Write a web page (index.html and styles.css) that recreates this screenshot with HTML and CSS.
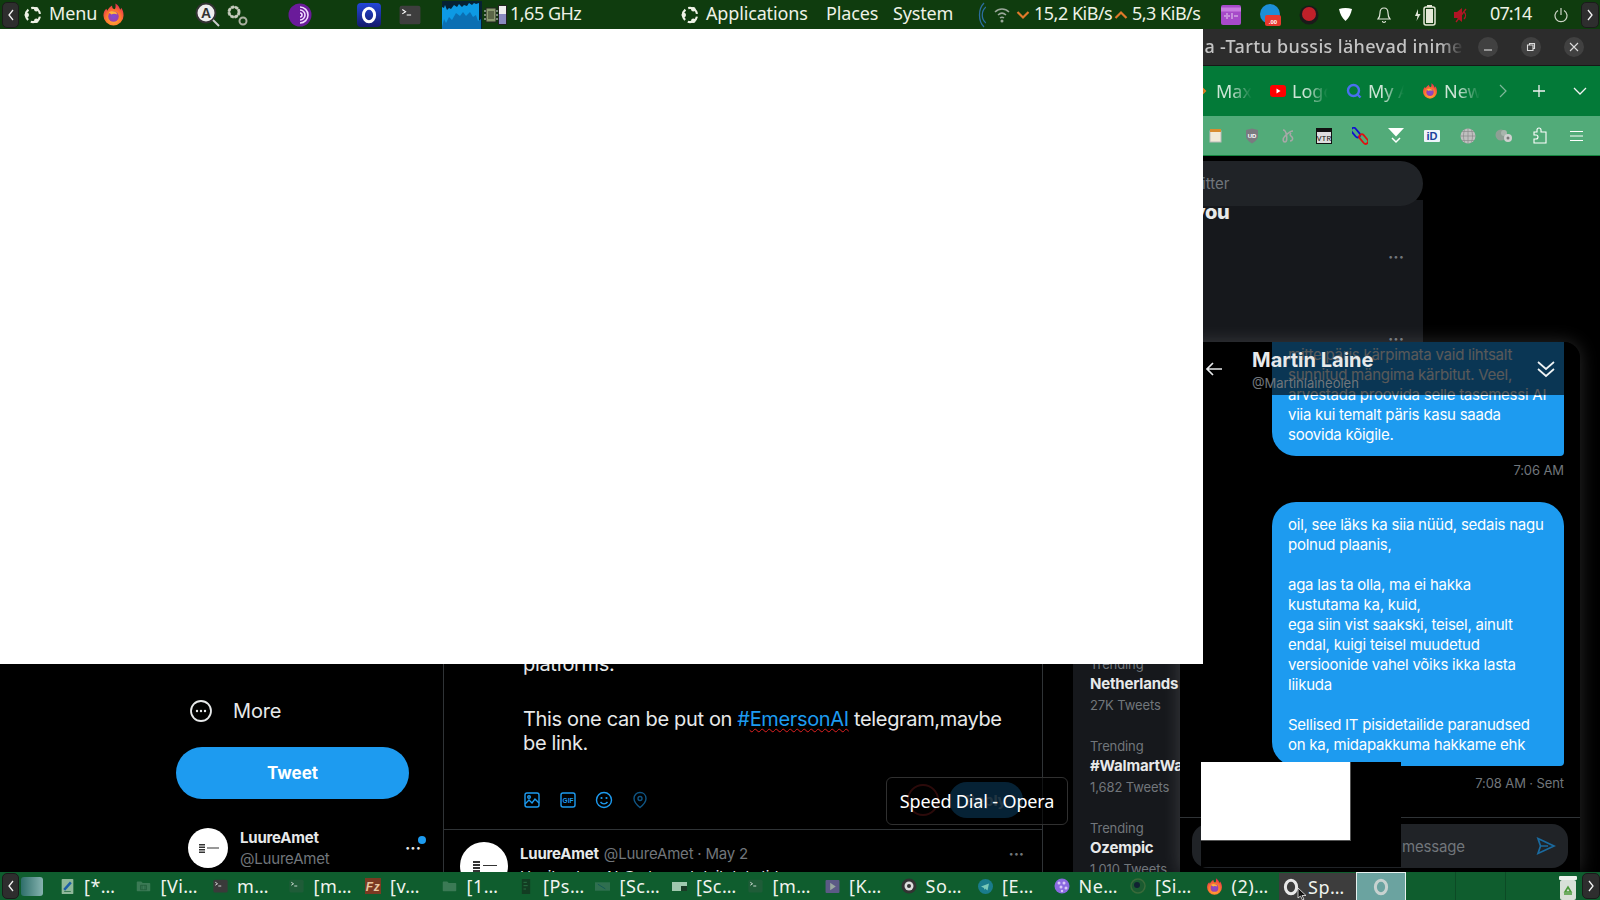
FILE: index.html
```html
<!DOCTYPE html>
<html lang="et">
<head>
<meta charset="utf-8">
<title>Desktop</title>
<link rel="stylesheet" href="styles.css">
</head>
<body>
<svg class="defs" width="0" height="0" aria-hidden="true">
  <defs>
    <radialGradient id="ffg" cx="50%" cy="70%" r="65%"><stop offset="0" stop-color="#ffbd3a"/><stop offset=".55" stop-color="#ff7a2e"/><stop offset="1" stop-color="#e8304f"/></radialGradient>
    <radialGradient id="ffp" cx="50%" cy="50%" r="55%"><stop offset="0" stop-color="#7a4fd8"/><stop offset="1" stop-color="#a43ca0"/></radialGradient>
    <symbol id="firefox" viewBox="0 0 24 24"><path d="M12 23.500a10.500 10.500 0 0 1-10.500-10.500c0-3 1.200-5.500 3-7l1 2c1-2.500 3-4 5-5.500 0 2.500 1 3.500 2.500 4 1-.500 1.500-2 1-6 3.500 2 4.500 5 5 6.500 .5-.5 .8-1 1-2 1.500 2 2.500 4.500 2.500 8A10.500 10.500 0 0 1 12 23.500z" fill="url(#ffg)"/><circle cx="12" cy="14" r="5.500" fill="url(#ffp)"/><path d="M7 10c3-2.500 8-1.500 9 2-2-1-5-1-6 0z" fill="#ffb53a"/></symbol>
    <symbol id="ubuntu" viewBox="0 0 24 24"><circle cx="12" cy="12" r="8.500" fill="none" stroke="currentColor" stroke-width="2.600" stroke-dasharray="14 3.800" stroke-dashoffset="-2"/><circle cx="4.500" cy="12" r="2.700" fill="currentColor"/><circle cx="16" cy="5" r="2.700" fill="currentColor"/><circle cx="16" cy="19" r="2.700" fill="currentColor"/></symbol>
    <symbol id="term" viewBox="0 0 20 18"><rect x=".5" y=".5" width="19" height="17" rx="2" fill="currentColor"/><path d="M3 4l3 2-3 2M7 9h4" fill="none" stroke="#fff" stroke-width="1"/></symbol>
    <symbol id="folder" viewBox="0 0 20 18"><path d="M1 4a1 1 0 0 1 1-1h5l2 2h9a1 1 0 0 1 1 1v9a1 1 0 0 1-1 1H2a1 1 0 0 1-1-1z" fill="#3b7a55"/></symbol>
    <symbol id="opera" viewBox="0 0 24 24"><ellipse cx="12" cy="12" rx="7.500" ry="9" fill="none" stroke="currentColor" stroke-width="4"/></symbol>
  </defs>
</svg>

<div class="screen">
  <header class="panel top">
    <div class="pgroup pl">
      <span class="edge"><svg width="8" height="12" viewBox="0 0 8 12"><path d="M6 1L2 6l4 5" class="line-w"/></svg></span>
      <svg class="ico ubu" width="20" height="20"><use href="#ubuntu"/></svg>
      <span class="ptext menu">Menu</span>
      <svg class="ico ff" width="23" height="23"><use href="#firefox"/></svg>
      <svg class="ico app-a" width="26" height="26" viewBox="0 0 26 26"><circle cx="11" cy="11" r="9.500" fill="#eee" stroke="#333" stroke-width="2"/><path d="M18 18l6 6" stroke="#ccc" stroke-width="2"/><text x="11" y="16" text-anchor="middle" class="a-letter">A</text></svg>
      <svg class="ico gears" width="24" height="24" viewBox="0 0 24 24"><circle cx="9" cy="9" r="5" fill="none" stroke="#b9c0b0" stroke-width="3" stroke-dasharray="3 1"/><circle cx="9" cy="9" r="5" fill="none" stroke="#c9cfc0" stroke-width="1.500"/><circle cx="18" cy="18" r="3.500" fill="none" stroke="#aab0a0" stroke-width="2"/></svg>
      <svg class="ico tor" width="24" height="24" viewBox="0 0 24 24"><circle cx="12" cy="12" r="11.500" fill="#6a1b9a"/><path d="M12 4a8 8 0 0 1 0 16M12 7a5 5 0 0 1 0 10M12 10a2 2 0 0 1 0 4" fill="none" stroke="#f2dcff" stroke-width="1.600"/></svg>
      <span class="ico opera-box"><svg width="18" height="18"><use href="#opera"/></svg></span>
      <svg class="ico pterm" width="22" height="20"><use href="#term"/></svg>
      <svg class="ico graph" width="40" height="28" viewBox="0 0 40 28"><rect width="40" height="28" fill="#062133"/><path d="M0 6l2 1 1-3 2 5 2-2 2 1 3-4 3 2 2-3 3 3 2-2 3 1 2-3 3 2 2-2 2 1 3-1v26H0z" fill="#0d9ae4"/><path d="M0 26l2-8 2 4 3-6 3 3 4-7 4 3 3-4 3 4 4-4 3 5 3-2 2 6 3-2v10H0z" fill="#0b6fb3"/></svg>
      <svg class="ico cpu" width="14" height="20" viewBox="0 0 14 20"><rect x="2" y="3" width="10" height="14" fill="#8a9a70" stroke="#222"/><rect x="4" y="6" width="6" height="8" fill="#5b6648"/><path d="M0 6h2M0 10h2M0 14h2M12 6h2M12 10h2M12 14h2" stroke="#ddd"/></svg>
      <span class="gauge"><span class="gauge-fill"></span></span>
      <span class="ptext ghz">1,65 GHz</span>
    </div>
    <div class="pgroup pc">
      <svg class="ico" width="20" height="20"><use href="#ubuntu"/></svg>
      <span class="ptext apps">Applications</span>
      <span class="ptext places">Places</span>
      <span class="ptext sys">System</span>
    </div>
    <div class="pgroup pr">
      <svg class="ico arcs" width="10" height="28" viewBox="0 0 10 28"><path d="M8 2C2 8 2 20 8 26M10 6C5 10 5 18 10 22" fill="none" stroke="#2c6ea0" stroke-width="1.300"/></svg>
      <svg class="ico wifi" width="18" height="18" viewBox="0 0 18 18"><path d="M2 6c4-4 10-4 14 0M5 9c2.500-2.300 5.500-2.300 8 0M7 12c1.200-1 2.800-1 4 0" fill="none" stroke="#9aa79a" stroke-width="1.500"/><circle cx="9" cy="15" r="1.500" fill="#9aa79a"/></svg>
      <svg class="ico down" width="14" height="10" viewBox="0 0 14 10"><path d="M1.500 2L7 7.500 12.500 2" class="line-o"/></svg>
      <span class="ptext rate">15,2 KiB/s</span>
      <svg class="ico up" width="14" height="10" viewBox="0 0 14 10"><path d="M1.500 8L7 2.500 12.500 8" class="line-o"/></svg>
      <span class="ptext rate rate2">5,3 KiB/s</span>
      <svg class="ico tray-a" width="20" height="20" viewBox="0 0 20 20"><rect width="20" height="20" rx="2" fill="#a64ac9"/><rect y="2.500" width="20" height="4" fill="#c77be0"/><path d="M3 11h2M6 8v6M8 10v2M11 8v6M13 11h4" stroke="#e8d0f0"/></svg>
      <svg class="ico tray-b" width="22" height="24" viewBox="0 0 22 24"><path d="M11 1a10 10 0 1 0 0 20 10 10 0 0 0 0-20z" fill="#1c8fd8"/><rect x="6" y="12" width="16" height="11" rx="2" fill="#e8382e"/><text x="14" y="21" text-anchor="middle" class="tiny">.00</text></svg>
      <svg class="ico tray-c" width="20" height="22" viewBox="0 0 20 22"><circle cx="10" cy="11" r="9.500" fill="#1a1a1a"/><circle cx="10" cy="10" r="7" fill="#c0202a"/></svg>
      <svg class="ico tray-d" width="15" height="14" viewBox="0 0 15 14"><path d="M1 1c4-1.300 9-1.300 13 0-1 5-3 9-6.500 12C4 10 2 6 1 1z" fill="#fff"/></svg>
      <svg class="ico bell" width="14" height="18" viewBox="0 0 14 18"><path d="M7 2c3 0 4 2 4 5s1 5 2 6H1c1-1 2-3 2-6s1-5 4-5zM5.500 15a1.500 1.500 0 0 0 3 0" fill="none" stroke="#dfe5d8" stroke-width="1.200"/></svg>
      <svg class="ico batt" width="22" height="22" viewBox="0 0 22 22"><path d="M3 5L0 12h2.500l-1 5 4-7H3z" fill="#dfe5d8"/><rect x="9" y="3" width="11" height="18" rx="2" fill="none" stroke="#e5ead8" stroke-width="1.500"/><rect x="12" y="1" width="5" height="2" fill="#e5ead8"/><rect x="11" y="5" width="7" height="14" fill="#e5ead8"/></svg>
      <svg class="ico vol" width="15" height="18" viewBox="0 0 15 18"><path d="M1 6h3l5-4v14l-5-4H1z" fill="#b01525"/><path d="M3 16L13 3M11 6c2 2 2 5 0 7" fill="none" stroke="#b01525" stroke-width="1.300"/></svg>
      <span class="ptext clock">07:14</span>
      <svg class="ico pow" width="14" height="16" viewBox="0 0 14 16"><path d="M4 3.500a6 6 0 1 0 6 0M7 1v7" fill="none" stroke="#cfd6c8" stroke-width="1.200"/></svg>
      <span class="edge edge-r"><svg width="8" height="12" viewBox="0 0 8 12"><path d="M2 1l4 5-4 5" class="line-w"/></svg></span>
    </div>
  </header>

  <main class="desk">
    <section class="browser">
      <div class="titlebar">
        <div class="wintitle">Linna -Tartu bussis lähevad inimesed tööle ja koju</div>
        <div class="winbtns">
          <span class="winbtn"><svg width="10" height="10" viewBox="0 0 10 10"><path d="M1 8h8" class="line-g"/></svg></span>
          <span class="winbtn"><svg width="10" height="10" viewBox="0 0 10 10"><path d="M1.500 3h5.500v5.500H1.500zM3.500 3V1.500h5v5H7" class="line-g"/></svg></span>
          <span class="winbtn"><svg width="10" height="10" viewBox="0 0 10 10"><path d="M1 1l8 8M9 1l-8 8" class="line-g"/></svg></span>
        </div>
      </div>

      <div class="tabstrip">
        <div class="tab"><svg width="16" height="16" viewBox="0 0 16 16"><path d="M5 2l6 6-6 6" fill="none" stroke="#e07a20" stroke-width="2"/></svg><span class="tabname">Max</span></div>
        <div class="tab"><svg width="16" height="12" viewBox="0 0 16 12"><rect width="16" height="12" rx="3" fill="#f00"/><path d="M6.500 3.500l4 2.500-4 2.500z" fill="#fff"/></svg><span class="tabname">Logout</span></div>
        <div class="tab"><svg width="16" height="16" viewBox="0 0 16 16"><circle cx="7.500" cy="7.500" r="5.500" fill="none" stroke="#4a6ff0" stroke-width="2.400"/><path d="M11 11l3.500 3.500" stroke="#4a6ff0" stroke-width="2.400"/></svg><span class="tabname">My Account</span></div>
        <div class="tab"><svg width="16" height="16"><use href="#firefox"/></svg><span class="tabname">New Tab</span></div>
        <span class="tabctl"><svg width="10" height="14" viewBox="0 0 10 14"><path d="M2 1l6 6-6 6" fill="none" stroke="#7fb89a" stroke-width="1.200"/></svg></span>
        <span class="tabctl plus"><svg width="14" height="14" viewBox="0 0 14 14"><path d="M7 1v12M1 7h12" class="line-w"/></svg></span>
        <span class="tabctl more"><svg width="14" height="10" viewBox="0 0 14 10"><path d="M1 2l6 6 6-6" class="line-w"/></svg></span>
      </div>

      <div class="toolbar">
        <span class="tool"><svg width="14" height="16" viewBox="0 0 14 16"><rect y="3" width="11" height="11" fill="#f2ead8" stroke="#bbb" transform="translate(1)"/><rect x="1" y="1" width="11" height="3" fill="#d88c30"/></svg></span>
        <span class="tool"><svg width="14" height="16" viewBox="0 0 14 16"><path d="M1 2l6-1.500L13 2v6c0 3-3 6-6 7.500C4 14 1 11 1 8z" fill="#7a7a80"/><text x="7" y="9.500" text-anchor="middle" class="tiny">UD</text></svg></span>
        <span class="tool"><svg width="16" height="16" viewBox="0 0 16 16"><path d="M3 2c2 0 3 2 3.500 5S7 14 5 14 2 11 5 8s5-5 8-5M11 5c-2 2 0 3 1 4s1 4-2 4" fill="none" stroke="#a8a8a8" stroke-width="1.600"/></svg></span>
        <span class="tool"><svg width="16" height="16" viewBox="0 0 16 16"><rect width="16" height="16" fill="#111"/><rect x="1" y="4" width="14" height="11" fill="#dedede"/><text x="8" y="13" text-anchor="middle" class="vtr">VTR</text></svg></span>
        <span class="tool"><svg width="16" height="18" viewBox="0 0 16 18"><rect x="-2" y="3.500" width="11" height="5" rx="2.500" transform="rotate(50 4 6)" fill="none" stroke="#1010d0" stroke-width="1.800"/><rect x="6" y="9" width="11" height="5" rx="2.500" transform="rotate(50 11 12)" fill="none" stroke="#e01010" stroke-width="1.800"/></svg></span>
        <span class="tool"><svg width="16" height="16" viewBox="0 0 16 16"><path d="M0 0h16L8 8.500z" fill="#fff"/><path d="M4 10l4 4 4-4" fill="none" stroke="#fff" stroke-width="1.500"/></svg></span>
        <span class="tool"><svg width="16" height="12" viewBox="0 0 16 12"><rect width="16" height="12" rx="1" fill="#eef3fa"/><text x="8" y="10" text-anchor="middle" class="idt">iD</text></svg></span>
        <span class="tool"><svg width="16" height="16" viewBox="0 0 16 16"><circle cx="8" cy="8" r="7.500" fill="#bfbfbf"/><path d="M0 8h16M8 0v16M2 3.500h12M2 12.500h12M5 1c-2 4-2 10 0 14M11 1c2 4 2 10 0 14" fill="none" stroke="#8a8a8a" stroke-width=".7"/></svg></span>
        <span class="tool"><svg width="18" height="14" viewBox="0 0 18 14"><circle cx="6" cy="6" r="5.500" fill="#8f9f95"/><circle cx="9" cy="4" r="3" fill="#a9b5ad"/><circle cx="13" cy="9" r="4" fill="#d0d0d0"/><circle cx="13" cy="9" r="1.500" fill="#777"/></svg></span>
        <span class="tool"><svg width="15" height="17" viewBox="0 0 15 17"><path d="M1 5h3V3a2 2 0 0 1 4 0v2h5v11H1v-4h2a2 2 0 0 0 0-4H1z" fill="none" stroke="#fff" stroke-width="1.100"/></svg></span>
        <span class="tool"><svg width="13" height="12" viewBox="0 0 13 12"><path d="M0 1.500h13M0 6h13M0 10.500h13" stroke="#fff" stroke-width="1.100"/></svg></span>
      </div>

      <div class="twitter">
        <nav class="side">
          <div class="more-row">
            <svg width="24" height="24" viewBox="0 0 24 24"><circle cx="12" cy="12" r="10" fill="none" stroke="#e7e9ea" stroke-width="1.800"/><circle cx="8" cy="12" r="1.200" fill="#e7e9ea"/><circle cx="12" cy="12" r="1.200" fill="#e7e9ea"/><circle cx="16" cy="12" r="1.200" fill="#e7e9ea"/></svg>
            <span>More</span>
          </div>
          <div class="tweet-btn">Tweet</div>
          <div class="me">
            <span class="avatar"><svg width="40" height="40" viewBox="0 0 40 40"><g fill="#333"><rect x="11" y="16" width="6" height="1.500"/><rect x="11" y="18.500" width="6" height="1.500"/><rect x="11" y="21" width="6" height="1.500"/><rect x="11" y="23.500" width="6" height="1.500"/><rect x="19" y="19.500" width="12" height="1"/></g></svg></span>
            <div class="me-names"><b>LuureAmet</b><span>@LuureAmet</span></div>
            <span class="me-dots">···</span>
            <span class="me-dot"></span>
          </div>
        </nav>

        <div class="feed">
          <div class="compose">
            <p class="compose-text">platforms.</p>
            <p class="compose-text gap">This one can be put on <span class="hash">#<span class="typo">EmersonAI</span></span> telegram,maybe be link.</p>
            <div class="compose-bar">
              <div class="tools">
                <svg width="18" height="18" viewBox="0 0 18 18"><rect x="2" y="2" width="14" height="14" rx="2" class="st-b"/><circle cx="6" cy="6" r="1.300" class="st-b"/><path d="M2 13l4-4 3 3 3-4 4 4" class="st-b"/></svg>
                <svg width="18" height="18" viewBox="0 0 18 18"><rect x="2" y="2" width="14" height="14" rx="2" class="st-b"/><text x="9" y="11.500" text-anchor="middle" class="gif">GIF</text></svg>
                <svg width="18" height="18" viewBox="0 0 18 18"><circle cx="9" cy="9" r="7.500" class="st-b"/><circle cx="6.500" cy="7" r="1.100" fill="#1d9bf0"/><circle cx="11.500" cy="7" r="1.100" fill="#1d9bf0"/><path d="M5.500 11c2 2.500 5 2.500 7 0" class="st-b"/></svg>
                <svg class="dim" width="18" height="18" viewBox="0 0 18 18"><path d="M9 1.500c3.500 0 6 2.500 6 6 0 3.500-3.500 7-6 9-2.500-2-6-5.500-6-9 0-3.500 2.500-6 6-6z" class="st-b"/><circle cx="9" cy="7.500" r="2" class="st-b"/></svg>
              </div>
              <div class="send-group">
                <span class="ring"></span>
                <span class="reply-pill">Reply</span>
              </div>
            </div>
          </div>
          <article class="post">
            <span class="avatar big"><svg width="48" height="48" viewBox="0 0 48 48"><g fill="#333"><rect x="13" y="19" width="7" height="2"/><rect x="13" y="22" width="7" height="2"/><rect x="13" y="25" width="7" height="2"/><rect x="13" y="28" width="7" height="2"/><rect x="23" y="23" width="14" height="1"/></g></svg></span>
            <div class="post-body">
              <div class="post-head"><b>LuureAmet</b><span>@LuureAmet · May 2</span><i class="post-dots">···</i></div>
              <p>Huvitav kas AI @ skeem tolgib tekstid</p>
            </div>
          </article>
        </div>

        <aside class="rail">
          <div class="search">Search Twitter</div>
          <div class="trends">
            <h2>Trends for you</h2>
            <div class="dots dots-a">···</div>
            <div class="dots dots-b">···</div>
            <div class="trend first-trend"><small>Trending</small><b>Netherlands</b><small>27K Tweets</small></div>
            <div class="trend"><small>Trending</small><b>#WalmartWalkout</b><small>1,682 Tweets</small></div>
            <div class="trend"><small>Trending</small><b>Ozempic</b><small>1,010 Tweets</small></div>
          </div>
        </aside>
      </div>
    </section>

    <div class="tooltip">Speed Dial - Opera</div>

    <section class="dm">
      <div class="dm-head">
        <svg class="dm-back" width="20" height="20" viewBox="0 0 20 20"><path d="M18 10H3M9 4l-6 6 6 6" fill="none" stroke="#e7e9ea" stroke-width="1.700"/></svg>
        <div class="dm-names"><b>Martin Laine</b><span>@Martinlaineolen</span></div>
        <svg class="dm-collapse" width="20" height="20" viewBox="0 0 20 20"><path d="M2 3l8 7 8-7M2 10l8 7 8-7" fill="none" stroke="#eff3f4" stroke-width="1.700"/></svg>
      </div>
      <div class="dm-list">
        <div class="bubble first">mitte päris kärpimata vaid lihtsalt<br>sunnitud mängima kärbitut. Veel,<br>arvestada proovida selle tasemessi AI<br>viia kui temalt päris kasu saada<br>soovida kõigile.</div>
        <div class="stamp">7:06 AM</div>
        <div class="bubble second">oil, see läks ka siia nüüd, sedais nagu<br>polnud plaanis,<br><br>aga las ta olla, ma ei hakka<br>kustutama ka, kuid,<br>ega siin vist saakski, teisel, ainult<br>endal, kuigi teisel muudetud<br>versioonide vahel võiks ikka lasta<br>liikuda<br><br>Sellised IT pisidetailide paranudsed<br>on ka, midapakkuma hakkame ehk</div>
        <div class="stamp late">7:08 AM · Sent</div>
      </div>
      <div class="dm-compose">
        <div class="dm-input">
          <span>Start a new message</span>
          <svg width="20" height="20" viewBox="0 0 20 20"><path d="M2 2.500L18 10 2 17.500 4.500 10zM4.500 10H12" fill="none" stroke="#1a6a9f" stroke-width="1.700"/></svg>
        </div>
      </div>
    </section>

    <div class="white-main"></div>
    <div class="black-block"><div class="white-small"></div></div>
  </main>

  <footer class="panel bottom">
    <span class="edge"><svg width="8" height="12" viewBox="0 0 8 12"><path d="M6 1L2 6l4 5" class="line-w"/></svg></span>
    <span class="showdesk"></span>
    <div class="tasks">
      <div class="task"><svg width="13" height="15" viewBox="0 0 14 18"><rect width="14" height="18" rx="1" fill="#8fb89a"/><path d="M3 13L11 4" stroke="#1c5fa8" stroke-width="3"/><path d="M3 15h8" stroke="#2c6f48"/></svg><span>[*…</span></div>
      <div class="task"><svg width="15" height="14" viewBox="0 0 20 18"><use href="#folder"/><path d="M6 8h8v6H6zM8 8v6M12 8v6" fill="none" stroke="#1f5c38"/></svg><span>[Vi…</span></div>
      <div class="task"><svg class="term-d" width="15" height="14"><use href="#term"/></svg><span>m…</span></div>
      <div class="task"><svg class="term-g" width="15" height="14"><use href="#term"/></svg><span>[m…</span></div>
      <div class="task"><svg width="16" height="16" viewBox="0 0 16 16"><rect width="16" height="16" fill="#7a3a22"/><text x="8" y="13" text-anchor="middle" class="fz">Fz</text></svg><span>[v…</span></div>
      <div class="task"><svg width="15" height="14" viewBox="0 0 20 18"><use href="#folder"/></svg><span>[1…</span></div>
      <div class="task"><svg width="10" height="15" viewBox="0 0 10 18"><rect width="10" height="18" fill="#123d22"/><path d="M2 4h4M2 8h5M2 12h3" stroke="#2f7a4a"/></svg><span>[Ps…</span></div>
      <div class="task"><svg width="15" height="9" viewBox="0 0 16 9"><rect width="16" height="9" fill="#2f6f4f"/><path d="M3 2l8 5" stroke="#155"/></svg><span>[Sc…</span></div>
      <div class="task"><svg width="15" height="9" viewBox="0 0 15 9"><rect width="15" height="9" fill="#9fc8ae"/><rect x="9" y="4" width="6" height="5" fill="#1a3a26"/></svg><span>[Sc…</span></div>
      <div class="task"><svg class="term-g" width="15" height="14"><use href="#term"/></svg><span>[m…</span></div>
      <div class="task"><svg width="15" height="13" viewBox="0 0 15 14"><rect width="15" height="14" rx="1" fill="#5c5a86"/><path d="M5 3l6 4-6 4z" fill="#9aa8a0"/></svg><span>[K…</span></div>
      <div class="task"><svg width="16" height="16" viewBox="0 0 16 16"><circle cx="8" cy="8" r="7.500" fill="#333"/><circle cx="8" cy="8" r="4.500" fill="#ddd"/><circle cx="8" cy="8" r="2" fill="#333"/></svg><span>So…</span></div>
      <div class="task"><svg width="15" height="15" viewBox="0 0 15 15"><circle cx="7.500" cy="7.500" r="7.500" fill="#1a7c8c"/><path d="M3 7.500l8-3-1.500 7-2.500-2-1 1.500V9z" fill="#7ac8b8"/></svg><span>[E…</span></div>
      <div class="task"><svg width="16" height="16" viewBox="0 0 16 16"><circle cx="8" cy="8" r="7.500" fill="#8a6ae0"/><circle cx="5" cy="5" r="1.500" fill="#d8c8f8"/><circle cx="10" cy="5" r="1.500" fill="#d8c8f8"/><circle cx="7" cy="9" r="1.500" fill="#d8c8f8"/><circle cx="12" cy="10" r="1.500" fill="#d8c8f8"/><circle cx="8" cy="13" r="1.200" fill="#d8c8f8"/></svg><span>Ne…</span></div>
      <div class="task"><svg width="16" height="16" viewBox="0 0 16 16"><circle cx="8" cy="8" r="7" fill="#1a5a30" stroke="#3a6a3a" stroke-width="1.500"/><circle cx="7" cy="7" r="3" fill="#123"/></svg><span>[Si…</span></div>
      <div class="task"><svg width="17" height="17"><use href="#firefox"/></svg><span>(2)…</span></div>
      <div class="task active"><svg class="op-w" width="18" height="18"><use href="#opera"/></svg><span>Sp…</span><svg class="cursor" width="12" height="14" viewBox="0 0 12 14"><path d="M1 1v10l2.500-2 2 4 1.500-.8-2-3.700H9z" fill="#111" stroke="#eee" stroke-width=".8"/></svg></div>
    </div>
    <div class="workspaces">
      <span class="ws current"><svg class="op-g" width="18" height="18"><use href="#opera"/></svg></span>
      <span class="ws"></span>
      <span class="ws"></span>
      <span class="ws last"></span>
    </div>
    <svg class="trash" width="18" height="24" viewBox="0 0 18 24"><rect x="1" y="4" width="16" height="20" rx="2" fill="#d8e0d8"/><rect width="18" height="4" rx="1" fill="#eef2ee"/><path d="M6 16l3-5 3 5zM5 18h8" fill="none" stroke="#4a9a3a" stroke-width="1.600"/></svg>
    <span class="edge edge-r"><svg width="8" height="12" viewBox="0 0 8 12"><path d="M2 1l4 5-4 5" class="line-w"/></svg></span>
  </footer>
</div>
</body>
</html>
```

FILE: styles.css
```css
* { box-sizing: border-box; }
html, body { margin: 0; height: 100%; }
body { background: #000; overflow: hidden; font-family: "Inter", "Liberation Sans", sans-serif; color: #e7e9ea; }
.defs { position: absolute; }
p, h2 { margin: 0; }

.screen { width: 1600px; height: 900px; display: flex; flex-direction: column; }

/* desktop panels */
.panel { display: flex; align-items: center; flex: none; font-family: "Noto Sans", sans-serif; color: #eef2e6; }
.top { height: 29px; background: #0f3c0e; }
.bottom { height: 28px; background: #0f5d2e; position: relative; z-index: 5; }
.pgroup { display: flex; align-items: center; height: 100%; }
.ptext { font-size: 18px; white-space: nowrap; line-height: 27px; padding-bottom: 2px; letter-spacing: -.15px; }
.ico { flex: none; display: block; }
.edge { flex: none; width: 17px; height: 26px; margin: 0 2px; background: #2e2e2e; border: 1px solid #1b1b1b; border-radius: 5px; display: flex; align-items: center; justify-content: center; }
.edge-r { margin: 0 1px 0 0; width: 18px; }
.line-w { fill: none; stroke: #f2f2f2; stroke-width: 1.300; }
.line-o { fill: none; stroke: #e0792a; stroke-width: 2.200; }
.line-g { fill: none; stroke: #dcdcdc; stroke-width: 1.100; }

.ubu { margin-left: 2px; }
.menu { margin-left: 6px; width: 46px; }
.ff { margin-left: 7px; }
.app-a { margin-left: 70px; }
.gears { margin-left: 4px; }
.tor { margin-left: 39px; }
.opera-box { margin-left: 45px; width: 24px; height: 24px; border-radius: 4px; background: linear-gradient(#2347d8, #141a6a); color: #fff; display: flex; align-items: center; justify-content: center; }
.pterm { margin-left: 18px; color: #3e3e3e; }
.graph { margin-left: 21px; }
.cpu { margin-left: 2px; }
.gauge { width: 9px; height: 20px; background: #eee; border: 1px solid #222; display: flex; align-items: flex-end; }
.gauge-fill { width: 100%; height: 55%; background: #8a8ac0; }
.ghz { margin-left: 3px; width: 72px; letter-spacing: -.5px; }

.pc { margin-left: 98px; }
.apps { margin-left: 6px; width: 103px; }
.places { margin-left: 17px; width: 51px; }
.sys { margin-left: 16px; width: 59px; }

.pr { margin-left: auto; }
.arcs { margin-right: 7px; }
.wifi { margin-right: 5px; }
.down { margin-right: 4px; }
.rate { letter-spacing: -.5px; width: 80px; }
.rate2 { width: 69px; margin-left: 4px; }
.tray-a { margin-left: 20px; }
.tray-b { margin-left: 18px; }
.tray-c { margin-left: 18px; }
.tray-d { margin-left: 19px; }
.bell { margin-left: 24px; }
.batt { margin-left: 24px; }
.vol { margin-left: 16px; }
.clock { margin-left: 22px; width: 42px; letter-spacing: -.9px; }
.pow { margin-left: 22px; margin-right: 13px; }

.a-letter { font: 700 14px "Liberation Sans", sans-serif; fill: #333; }
.tiny { font: 700 6px "Liberation Sans", sans-serif; fill: #fff; }
.vtr { font: 400 8px "Liberation Mono", monospace; fill: #111; }
.idt { font: 700 11px "Liberation Sans", sans-serif; fill: #1a3f9c; }
.fz { font: italic 700 12px "Liberation Sans", sans-serif; fill: #e8c8a0; }
.gif { font: 700 6.500px "Liberation Sans", sans-serif; fill: #1d9bf0; }

/* desktop */
.desk { flex: 1; min-height: 0; position: relative; overflow: hidden; }
.browser { position: absolute; inset: 0; display: flex; flex-direction: column; }

.titlebar { flex: none; height: 37px; background: #2c2c2c; border-bottom: 1px solid #171717; display: flex; align-items: center; font-family: "Noto Sans", sans-serif; }
.wintitle { flex: 1; min-width: 0; padding-left: 1166px; padding-bottom: 2px; white-space: nowrap; overflow: hidden; font-size: 18px; font-weight: 500; letter-spacing: .35px; color: #c4c4c4; -webkit-mask-image: linear-gradient(90deg, #000 1440px, transparent 1464px); mask-image: linear-gradient(90deg, #000 1440px, transparent 1464px); }
.winbtns { flex: none; display: flex; gap: 23px; width: 127px; padding-left: 5px; }
.winbtn { width: 20px; height: 20px; border-radius: 50%; background: #414141; display: flex; align-items: center; justify-content: center; }

.tabstrip { flex: none; height: 50px; background: #037a38; display: flex; align-items: center; justify-content: flex-end; font-family: "Noto Sans", sans-serif; }
.tab { width: 76px; flex: none; display: flex; align-items: center; gap: 6px; padding-left: 13px; overflow: hidden; }
.tab svg { flex: none; }
.tabname { font-size: 18px; color: #cde5d6; white-space: nowrap; -webkit-mask-image: linear-gradient(90deg, #000 14px, transparent 36px); mask-image: linear-gradient(90deg, #000 14px, transparent 36px); }
.tabctl { flex: none; display: flex; justify-content: center; width: 36px; }
.plus { margin: 0 5px 0 1px; width: 34px; }
.more { margin-right: 1px; width: 38px; }

.toolbar { flex: none; height: 40px; background: #52ab79; border-bottom: 1px solid #14853f; display: flex; align-items: center; justify-content: flex-end; padding-right: 6px; }
.tool { width: 36px; flex: none; display: flex; align-items: center; justify-content: center; }

/* twitter page */
.twitter { flex: 1; min-height: 0; display: grid; grid-template-columns: 443px 600px 1fr; background: #000; }
.side { display: flex; flex-direction: column; justify-content: flex-end; padding: 0 0 4px 176px; position: relative; }
.more-row { display: flex; align-items: center; gap: 20px; margin: 0 0 24px 13px; height: 24px; font-size: 20px; letter-spacing: -.15px; }
.tweet-btn { width: 233px; height: 52px; border-radius: 26px; background: #1d9bf0; color: #fff; font-weight: 700; font-size: 17px; display: flex; align-items: center; justify-content: center; margin-bottom: 29px; }
.me { display: flex; align-items: center; gap: 12px; margin-left: 12px; height: 40px; position: relative; width: 240px; }
.avatar { flex: none; width: 40px; height: 40px; border-radius: 50%; background: #fff; display: block; overflow: hidden; }
.avatar svg { display: block; }
.avatar.big { width: 48px; height: 48px; }
.me-names { display: flex; flex-direction: column; gap: 3px; font-size: 15px; line-height: 18px; letter-spacing: -.2px; }
.me-names b { color: #e7e9ea; }
.me-names span { color: #71767b; }
.me-dots { position: absolute; left: 217px; top: 8px; font-size: 16px; font-weight: 700; color: #e7e9ea; line-height: 24px; }
.me-dot { position: absolute; left: 230px; top: 8px; width: 8px; height: 8px; border-radius: 50%; background: #1d9bf0; }

.feed { border-left: 1px solid #2f3336; border-right: 1px solid #2f3336; overflow: hidden; padding-top: 496px; }
.compose { padding: 0 20px 0 79px; height: 178px; border-bottom: 1px solid #2f3336; }
.compose-text { font-size: 20px; line-height: 24px; color: #e7e9ea; letter-spacing: -.35px; }
.compose-text.gap { margin-top: 31px; }
.hash { color: #1d9bf0; }
.typo { text-decoration: underline wavy #e02020 1px; text-underline-offset: 2px; }
.compose-bar { display: flex; align-items: center; justify-content: space-between; margin-top: 27px; }
.tools { display: flex; gap: 18px; }
.tools svg { display: block; }
.st-b { fill: none; stroke: #1d9bf0; stroke-width: 1.400; }
.dim { opacity: .55; }
.send-group { display: flex; align-items: center; gap: 10px; margin-right: -1px; }
.ring { width: 32px; height: 32px; border-radius: 50%; border: 2px solid #6e1a1a; }
.reply-pill { width: 74px; height: 36px; border-radius: 18px; background: rgba(29,155,240,.55); color: rgba(255,255,255,.3); display: flex; align-items: center; justify-content: center; font-weight: 700; font-size: 15px; }

.post { display: flex; gap: 12px; padding: 12px 16px 0; }
.post-body { flex: 1; font-size: 15px; line-height: 20px; letter-spacing: -.2px; padding-top: 2px; }
.post-head { display: flex; gap: 5px; align-items: center; }
.post-head b { color: #e7e9ea; }
.post-head span { color: #71767b; }
.post-dots { margin-left: auto; font-style: normal; font-weight: 700; color: #71767b; font-size: 16px; margin-right: 2px; }
.post-body p { margin-top: 3px; color: #e7e9ea; }

.rail { padding: 5px 0 0 30px; overflow: hidden; }
.search { width: 350px; height: 45px; border-radius: 23px; background: #202327; color: #71767b; font-size: 15px; display: flex; align-items: center; padding-left: 54px; position: relative; z-index: 1; }
.trends { width: 350px; height: 700px; margin-top: 4px; background: #16181c; padding: 0 17px; position: relative; }
.trends h2 { font-size: 20px; line-height: 24px; font-weight: 800; margin-top: -10px; white-space: nowrap; letter-spacing: -.3px; }
.dots { position: absolute; right: 19px; color: #71767b; font-size: 16px; font-weight: 700; line-height: 18px; }
.dots-a { top: 48px; }
.dots-b { top: 130px; }
.trend { display: flex; flex-direction: column; white-space: nowrap; margin-bottom: 25px; }
.first-trend { margin-top: 432px; }
.trend small { font-size: 13px; line-height: 16px; color: #71767b; letter-spacing: -.1px; }
.trend b { font-size: 15px; line-height: 20px; color: #e7e9ea; margin: 2px 0 3px; letter-spacing: -.2px; }

/* floating */
.tooltip { position: absolute; left: 886px; top: 748px; width: 182px; height: 48px; display: flex; align-items: center; justify-content: center; background: rgba(0,0,0,.6); border: 1px solid #303030; border-radius: 6px; color: #fff; font: 18px "Noto Sans", sans-serif; white-space: nowrap; letter-spacing: -.15px; }

.dm { position: absolute; left: 1180px; top: 313px; width: 400px; height: 530px; background: #000; border-radius: 16px 16px 0 0; box-shadow: 0 0 18px rgba(217,217,217,.2); display: flex; flex-direction: column; overflow: hidden; }
.dm-head { position: absolute; top: 0; left: 0; right: 0; height: 53px; background: rgba(0,0,0,.65); z-index: 2; }
.dm-back { position: absolute; left: 24px; top: 17px; }
.dm-names { position: absolute; left: 72px; top: 6px; display: flex; flex-direction: column; }
.dm-names b { font-size: 20px; line-height: 24px; color: #e7e9ea; }
.dm-names span { font-size: 13px; line-height: 18px; margin-top: 2px; color: #71767b; }
.dm-collapse { position: absolute; right: 24px; top: 17px; }
.dm-list { flex: 1; min-height: 0; display: flex; flex-direction: column; align-items: flex-end; padding-right: 16px; }
.bubble { width: 292px; background: #1d9bf0; color: #fff; font-size: 15px; line-height: 20px; padding: 13px 16px 11px; white-space: nowrap; letter-spacing: -.25px; }
.first { border-radius: 0 0 4px 24px; padding: 3px 16px 11px; }
.second { border-radius: 24px 24px 4px 24px; margin-top: 24px; }
.stamp { font-size: 13px; line-height: 16px; color: #71767b; margin-top: 6px; letter-spacing: -.1px; }
.late { margin-top: 9px; }
.dm-compose { flex: none; height: 55px; border-top: 1px solid #2f3336; padding: 6px 12px 4px; }
.dm-input { height: 44px; border-radius: 16px; background: #202327; display: flex; align-items: center; justify-content: space-between; padding: 0 12px 0 128px; font-size: 15px; color: #71767b; letter-spacing: -.2px; }

.white-main { position: absolute; left: 0; top: 0; width: 1203px; height: 635px; background: #fff; z-index: 3; }
.black-block { position: absolute; left: 1201px; top: 733px; width: 200px; height: 105px; background: #000; z-index: 3; }
.white-small { width: 150px; height: 79px; background: #fff; border: solid #555; border-width: 0 1px 1px 0; }

/* taskbar */
.showdesk { flex: none; width: 22px; height: 19px; border-radius: 3px; background: linear-gradient(90deg, #2e6e6a, #86b3b0); }
.tasks { flex: none; display: grid; grid-template-columns: repeat(17, 76.500px); margin-left: 12px; height: 100%; }
.task { display: grid; grid-template-columns: 24px 1fr; column-gap: 5px; align-items: center; justify-items: start; position: relative; font-size: 18px; letter-spacing: .5px; color: #f0f4ee; white-space: nowrap; overflow: hidden; }
.task svg { justify-self: center; }
.task span { line-height: 28px; }
.term-d { color: #3a3a3a; }
.term-g { color: #1f5c38; }
.active { background: #3d3d3d; margin-top: 1px; }
.op-w { color: #e8e8e8; }
.task .cursor { position: absolute; left: 18px; top: 14px; }
.workspaces { flex: none; display: flex; height: 100%; }
.ws { width: 50px; height: 100%; border-right: 1px solid #0c4a25; display: flex; align-items: center; justify-content: center; }
.ws.current { background: #6ba3a0; border: 1px solid #e6f0ee; border-bottom-width: 0; }
.ws.last { border-right: 0; width: 51px; }
.op-g { color: #c8d2d0; }
.trash { flex: none; margin: 4px 0 0 2px; }
.bottom > .edge-r { margin-left: 5px; }
```
